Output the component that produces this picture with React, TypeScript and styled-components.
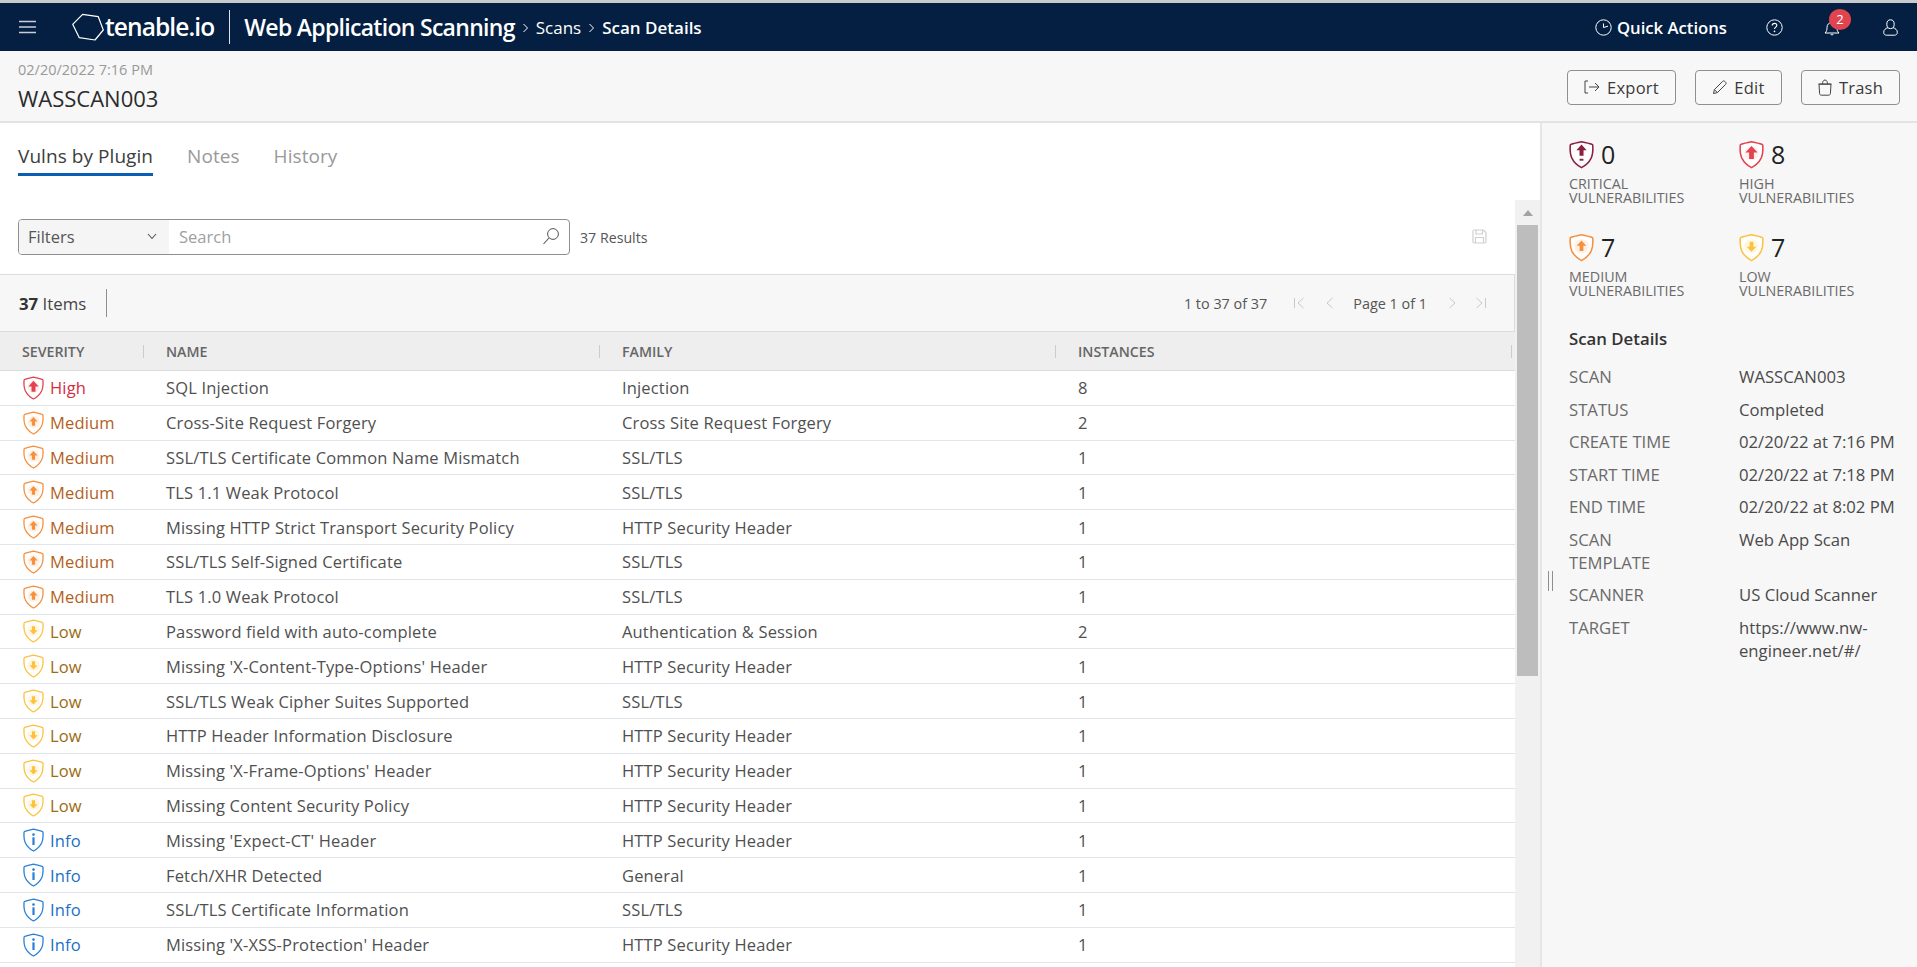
import React from 'react';
import styled, { createGlobalStyle } from 'styled-components';

const Global = createGlobalStyle`
  html, body { margin: 0; padding: 0; height: 100%; overflow: hidden; background: #fff; }
  body { font-family: "Open Sans", "Liberation Sans", sans-serif; color: #3a3a3a; }
  * { box-sizing: border-box; }
`;

const Page = styled.div`
  display: flex;
  flex-direction: column;
  height: 967px;
  overflow: hidden;
  border-top: 3px solid #c9cccf;
`;

const NavBar = styled.header`
  display: flex;
  align-items: center;
  height: 48px;
  flex: none;
  background: #041f42;
  color: #fff;
  padding-left: 18px;
  padding-right: 18px;
`;
const Burger = styled.svg`
  width: 19px;
  height: 14px;
  margin-right: 35px;
`;
const LogoMark = styled.svg`
  width: 32px;
  height: 30px;
  margin-right: 1px;
`;
const LogoText = styled.span`
  font-size: 24.5px;
  font-weight: 600;
  letter-spacing: -0.9px;
  line-height: 48px;
`;
const NavDivider = styled.div`
  width: 1px;
  height: 34px;
  background: #dfe3e8;
  margin: 0 14px 0 15px;
`;
const ProductName = styled.span`
  font-size: 23px;
  font-weight: 600;
  letter-spacing: -0.7px;
`;
const Crumb = styled.span<{ $current?: boolean }>`
  font-size: 17px;
  font-weight: ${p => (p.$current ? 600 : 400)};
  margin-left: 4px;
`;
const CrumbChevron = styled.svg`
  width: 7px;
  height: 10px;
  margin-left: 7px;
  margin-right: 3px;
  margin-top: 2px;
`;
const NavRight = styled.div`
  margin-left: auto;
  display: flex;
  align-items: center;
`;
const QuickActions = styled.span`
  display: flex;
  align-items: center;
  gap: 5px;
  font-size: 16.7px;
  font-weight: 600;
  margin-right: 39px;
`;
const NavIcon = styled.span<{ $gap: number }>`
  position: relative;
  display: flex;
  margin-right: ${p => p.$gap}px;
`;
const Badge = styled.span`
  position: absolute;
  left: 5px;
  top: -10px;
  width: 22px;
  height: 21px;
  border-radius: 50%;
  background: #e0454f;
  color: #fff;
  font-size: 13px;
  line-height: 21px;
  text-align: center;
`;

const SubHeader = styled.div`
  flex: none;
  height: 72px;
  display: flex;
  justify-content: space-between;
  background: #f7f7f7;
  border-bottom: 2px solid #e3e3e3;
  padding: 0 17px 0 18px;
`;
const TitleBlock = styled.div`
  display: flex;
  flex-direction: column;
  padding-top: 9px;
`;
const DateLine = styled.div`
  font-size: 14.5px;
  line-height: 19px;
  color: #999;
`;
const Title = styled.h1`
  margin: 4px 0 0;
  font-size: 22px;
  line-height: 30px;
  font-weight: 400;
  color: #2b2b2b;
`;
const Actions = styled.div`
  display: flex;
  gap: 19px;
  padding-top: 19px;
`;
const ActionButton = styled.button<{ $w: number }>`
  width: ${p => p.$w}px;
  height: 35px;
  display: flex;
  align-items: center;
  justify-content: center;
  gap: 7px;
  background: #f8f8f8;
  border: 1px solid #8f8f8f;
  border-radius: 4px;
  font-family: inherit;
  font-size: 16.5px;
  letter-spacing: 0.25px;
  color: #3a3a3a;
  padding: 0 0 1px;
`;

const Body = styled.div`
  flex: 1;
  display: flex;
  min-height: 0;
  position: relative;
`;
const Main = styled.main`
  width: 1540px;
  flex: none;
  display: flex;
  flex-direction: column;
  min-height: 0;
`;
const Tabs = styled.nav`
  flex: none;
  height: 77px;
  display: flex;
  gap: 34px;
  padding: 18px 18px 0;
`;
const Tab = styled.div<{ $active?: boolean }>`
  height: 35px;
  font-size: 19px;
  letter-spacing: 0.06px;
  line-height: 31px;
  color: ${p => (p.$active ? '#3d3d3d' : '#999')};
  border-bottom: ${p => (p.$active ? '3px solid #0a5fb4' : 'none')};
`;
const Content = styled.div`
  flex: 1;
  display: flex;
  min-height: 0;
`;
const TableColumn = styled.div`
  width: 1515px;
  flex: none;
  display: flex;
  flex-direction: column;
`;
const FilterRow = styled.div`
  flex: none;
  height: 74px;
  display: flex;
  align-items: flex-start;
  padding: 19px 28px 0 18px;
`;
const FilterBox = styled.div`
  width: 552px;
  height: 36px;
  display: flex;
  border: 1px solid #8f8f8f;
  border-radius: 4px;
  overflow: hidden;
`;
const FilterSelect = styled.div`
  width: 150px;
  display: flex;
  align-items: center;
  justify-content: space-between;
  padding: 0 12px 2px 9px;
  background: #f5f5f5;
  font-size: 16.5px;
  color: #555;
`;
const SearchField = styled.div`
  flex: 1;
  display: flex;
  align-items: center;
  justify-content: space-between;
  padding: 0 9px 2px 10px;
  font-size: 16.5px;
  color: #a0a0a0;
`;
const ResultCount = styled.span`
  margin-left: 10px;
  font-size: 14.2px;
  line-height: 37px;
  color: #555;
`;
const SaveIcon = styled.svg`
  margin-left: auto;
  margin-top: 10px;
  width: 15px;
  height: 15px;
`;
const Toolbar = styled.div`
  flex: none;
  height: 58px;
  display: flex;
  align-items: center;
  background: #f7f7f7;
  border-top: 1px solid #dcdcdc;
  border-bottom: 1px solid #dcdcdc;
  border-right: 1px solid #dcdcdc;
  padding-left: 19px;
`;
const ItemCount = styled.span`
  font-size: 16.8px;
  color: #444;
  padding-right: 20px;
  height: 28px;
  line-height: 29px;
  border-right: 1px solid #8f8f8f;
  b { font-weight: 700; color: #333; }
`;
const Pager = styled.div`
  margin-left: auto;
  display: flex;
  align-items: center;
  font-size: 14.4px;
  color: #555;
  padding-right: 27px;
`;
const PagerIcon = styled.svg<{ $before: number }>`
  width: 12px;
  height: 12px;
  margin-left: ${p => p.$before}px;
`;
const PagerLabel = styled.span<{ $before: number }>`
  margin-left: ${p => p.$before}px;
`;
const gridCols = '144px 456px 456px 1fr';
const HeaderRow = styled.div`
  flex: none;
  height: 39px;
  display: grid;
  grid-template-columns: ${gridCols};
  align-items: center;
  background: #eee;
  border-bottom: 1px solid #dcdcdc;
`;
const HeaderCell = styled.div`
  position: relative;
  padding-left: 22px;
  font-size: 14.2px;
  font-weight: 600;
  color: #666;
  &::after {
    content: '';
    position: absolute;
    right: 0;
    top: 3px;
    width: 1px;
    height: 13px;
    background: #ccc;
  }
  &:last-child::after { right: 3px; }
`;
const Row = styled.div`
  flex: none;
  height: 34.8px;
  display: grid;
  grid-template-columns: ${gridCols};
  align-items: center;
  border-bottom: 1px solid #e1e4ea;
  font-size: 16.5px;
  letter-spacing: 0.16px;
  color: #505050;
`;
const SeverityCell = styled.div<{ $c: string }>`
  display: flex;
  align-items: center;
  gap: 6px;
  padding-left: 23px;
  color: ${p => p.$c};
`;
const Cell = styled.div`
  padding-left: 22px;
`;
const Scrollbar = styled.div`
  flex: none;
  width: 25px;
  background: #f1f1f1;
  padding: 0 2px;
  display: flex;
  flex-direction: column;
  align-items: stretch;
`;
const ScrollArrow = styled.div`
  height: 25px;
  display: flex;
  align-items: center;
  justify-content: center;
  &::before {
    content: '';
    border-left: 5.5px solid transparent;
    border-right: 5.5px solid transparent;
    border-bottom: 6px solid #a3a3a3;
  }
`;
const ScrollThumb = styled.div`
  height: 451px;
  background: #bdbdbd;
`;
const Side = styled.aside`
  flex: 1;
  background: #f7f7f7;
  border-left: 2px solid #e6e6e6;
  padding: 16px 17px 0 27px;
`;
const Splitter = styled.div`
  position: absolute;
  left: 1548px;
  top: 448px;
  width: 5px;
  height: 20px;
  border-left: 1px solid #8f8f8f;
  border-right: 1px solid #8f8f8f;
`;
const StatGrid = styled.div`
  display: grid;
  grid-template-columns: 170px 1fr;
  row-gap: 27px;
`;
const Stat = styled.div``;
const StatTop = styled.div`
  display: flex;
  align-items: center;
  gap: 7px;
  height: 31px;
`;
const StatNumber = styled.span`
  font-size: 25px;
  line-height: 31px;
  color: #222;
`;
const StatLabel = styled.div`
  margin-top: 7px;
  font-size: 14.3px;
  line-height: 14px;
  color: #6a6a6a;
  text-transform: uppercase;
`;
const DetailsHeading = styled.h2`
  margin: 30px 0 15px;
  font-size: 16.8px;
  line-height: 22px;
  font-weight: 600;
  color: #333;
`;
const DetailRow = styled.div`
  display: grid;
  grid-template-columns: 170px 1fr;
  margin-bottom: 9.5px;
  font-size: 16.7px;
  line-height: 23px;
`;
const DetailKey = styled.div`
  color: #6a6a6a;
  padding-right: 50px;
`;
const DetailValue = styled.div`
  color: #4a4a4a;
  overflow-wrap: anywhere;
`;

type Sev = 'critical' | 'high' | 'medium' | 'low' | 'info';
const sevColor: Record<Sev, { icon: string; text: string; tint: string }> = {
  critical: { icon: '#8c1f3f', text: '#8c1f3f', tint: '#fff' },
  high: { icon: '#e2434f', text: '#d62b40', tint: '#feeeee' },
  medium: { icon: '#f5903f', text: '#b35f1c', tint: '#fef1e4' },
  low: { icon: '#fcc23f', text: '#9a6c12', tint: '#fff6e0' },
  info: { icon: '#2a80d8', text: '#1b6fc6', tint: '#fff' },
};
const sevLabel: Record<string, string> = { high: 'High', medium: 'Medium', low: 'Low', info: 'Info' };

const ARROW_UP = 'M10.5 4.8L15.6 10.4H12.5V15.8H8.5V10.4H5.4Z';
const ARROW_DOWN = 'M8.5 6.2H12.5V11.4H15.6L10.5 16.6L5.4 11.4H8.5Z';

const Shield = ({ sev, w = 21, h = 24 }: { sev: Sev; w?: number; h?: number }) => {
  const c = sevColor[sev];
  return (
    <svg width={w} height={h} viewBox="0 0 21 24" fill="none" style={{ flex: 'none' }}>
      <path
        d="M10.5 1.2C13.5 1.8 16.5 2.4 19.2 3.4C19.8 3.6 20 4 20 4.6C20.2 8.5 20 12 18.6 15C16.8 18.6 14 21.2 10.5 23C7 21.2 4.2 18.6 2.4 15C1 12 .8 8.5 1 4.6C1 4 1.2 3.6 1.8 3.4C4.5 2.4 7.5 1.8 10.5 1.2Z"
        stroke={c.icon}
        strokeWidth="1.3"
        fill="#fff"
      />
      {sev !== 'info' && <circle cx="10.5" cy="11" r="6" fill={c.tint} />}
      {sev === 'high' && <path d={ARROW_UP} fill={c.icon} />}
      {sev === 'medium' && <path d={ARROW_UP} fill={c.icon} transform="translate(2.1 2.2) scale(.8)" />}
      {sev === 'critical' && (
        <>
          <path d={ARROW_UP} fill={c.icon} transform="translate(1.6 -.4) scale(.85)" />
          <rect x="8.9" y="15.6" width="3.2" height="1.6" fill={c.icon} />
        </>
      )}
      {sev === 'low' && <path d={ARROW_DOWN} fill={c.icon} transform="translate(2.1 2.2) scale(.8)" />}
      {sev === 'info' && (
        <>
          <circle cx="10.5" cy="6.6" r="1.3" fill={c.icon} />
          <rect x="9.4" y="9.3" width="2.2" height="7.7" fill={c.icon} />
        </>
      )}
    </svg>
  );
};

const rows: [Sev, string, string, number][] = [
  ['high', 'SQL Injection', 'Injection', 8],
  ['medium', 'Cross-Site Request Forgery', 'Cross Site Request Forgery', 2],
  ['medium', 'SSL/TLS Certificate Common Name Mismatch', 'SSL/TLS', 1],
  ['medium', 'TLS 1.1 Weak Protocol', 'SSL/TLS', 1],
  ['medium', 'Missing HTTP Strict Transport Security Policy', 'HTTP Security Header', 1],
  ['medium', 'SSL/TLS Self-Signed Certificate', 'SSL/TLS', 1],
  ['medium', 'TLS 1.0 Weak Protocol', 'SSL/TLS', 1],
  ['low', 'Password field with auto-complete', 'Authentication & Session', 2],
  ['low', "Missing 'X-Content-Type-Options' Header", 'HTTP Security Header', 1],
  ['low', 'SSL/TLS Weak Cipher Suites Supported', 'SSL/TLS', 1],
  ['low', 'HTTP Header Information Disclosure', 'HTTP Security Header', 1],
  ['low', "Missing 'X-Frame-Options' Header", 'HTTP Security Header', 1],
  ['low', 'Missing Content Security Policy', 'HTTP Security Header', 1],
  ['info', "Missing 'Expect-CT' Header", 'HTTP Security Header', 1],
  ['info', 'Fetch/XHR Detected', 'General', 1],
  ['info', 'SSL/TLS Certificate Information', 'SSL/TLS', 1],
  ['info', "Missing 'X-XSS-Protection' Header", 'HTTP Security Header', 1],
];

const stats: [Sev, number, string][] = [
  ['critical', 0, 'Critical'],
  ['high', 8, 'High'],
  ['medium', 7, 'Medium'],
  ['low', 7, 'Low'],
];

const details: [string, string][] = [
  ['SCAN', 'WASSCAN003'],
  ['STATUS', 'Completed'],
  ['CREATE TIME', '02/20/22 at 7:16 PM'],
  ['START TIME', '02/20/22 at 7:18 PM'],
  ['END TIME', '02/20/22 at 8:02 PM'],
  ['SCAN TEMPLATE', 'Web App Scan'],
  ['SCANNER', 'US Cloud Scanner'],
  ['TARGET', 'https://www.nw-engineer.net/#/'],
];

const Chevron = () => (
  <CrumbChevron viewBox="0 0 7 10" fill="none">
    <path d="M1.5 1L5.5 5L1.5 9" stroke="#fff" strokeWidth="1" />
  </CrumbChevron>
);

const PAGER_STROKE = '#c9c9c9';

export default function App() {
  return (
    <Page>
      <Global />
      <NavBar>
        <Burger viewBox="0 0 19 14" fill="none">
          <path d="M1 1.5H18M1 7H18M1 12.5H18" stroke="#c9ced6" strokeWidth="1.6" />
        </Burger>
        <LogoMark viewBox="0 0 32 30" fill="none">
          <path d="M10.6 2.3L26.3 4.7L31.3 18L23 28L7.3 25.7L.7 12.3Z" stroke="#fff" strokeWidth="1.2" strokeLinejoin="round" />
        </LogoMark>
        <LogoText>tenable.io</LogoText>
        <NavDivider />
        <ProductName>Web Application Scanning</ProductName>
        <Chevron />
        <Crumb>Scans</Crumb>
        <Chevron />
        <Crumb $current>Scan Details</Crumb>
        <NavRight>
          <QuickActions>
            <svg width="17" height="17" viewBox="0 0 17 17" fill="none">
              <circle cx="8.5" cy="8.5" r="7.7" stroke="#fff" strokeWidth="1" />
              <path d="M8.5 4.5V8.5L13 7.2" stroke="#fff" strokeWidth="1" />
            </svg>
            Quick Actions
          </QuickActions>
          <NavIcon $gap={41}>
            <svg width="17" height="17" viewBox="0 0 17 17" fill="none">
              <circle cx="8.5" cy="8.5" r="7.7" stroke="#fff" strokeWidth="1" />
              <path d="M6.2 6.6C6.2 5.2 7.2 4.4 8.5 4.4C9.8 4.4 10.8 5.2 10.8 6.4C10.8 8 8.5 8.2 8.5 10" stroke="#fff" strokeWidth="1.1" />
              <circle cx="8.5" cy="12.4" r=".8" fill="#fff" />
            </svg>
          </NavIcon>
          <NavIcon $gap={43}>
            <svg width="16" height="17" viewBox="0 0 16 17" fill="none">
              <path d="M1 14C2.6 12.6 3 11 3 8.5C3 5.5 5 3.4 8 3.4C11 3.4 13 5.5 13 8.5C13 11 13.4 12.6 15 14Z" stroke="#fff" strokeWidth="1" strokeLinejoin="round" />
              <path d="M6.6 15C7 16.2 9 16.2 9.4 15" stroke="#fff" strokeWidth="1" />
            </svg>
            <Badge>2</Badge>
          </NavIcon>
          <NavIcon $gap={1}>
            <svg width="15" height="17" viewBox="0 0 15 17" fill="none">
              <ellipse cx="7.5" cy="5.2" rx="3.7" ry="4.4" stroke="#fff" strokeWidth="1" />
              <path d="M5 8.6C2.5 9.4.7 11 .7 13.2C.7 15.3 2 16.2 3.5 16.2H11.5C13 16.2 14.3 15.3 14.3 13.2C14.3 11 12.5 9.4 10 8.6" stroke="#fff" strokeWidth="1" />
            </svg>
          </NavIcon>
        </NavRight>
      </NavBar>

      <SubHeader>
        <TitleBlock>
          <DateLine>02/20/2022 7:16 PM</DateLine>
          <Title>WASSCAN003</Title>
        </TitleBlock>
        <Actions>
          <ActionButton $w={109}>
            <svg width="16" height="14" viewBox="0 0 16 14" fill="none">
              <path d="M4 1H1V13H4" stroke="#444" strokeWidth="1" />
              <path d="M5 7H15M11 3L15 7L11 11" stroke="#444" strokeWidth="1" />
            </svg>
            Export
          </ActionButton>
          <ActionButton $w={87}>
            <svg width="15" height="15" viewBox="0 0 15 15" fill="none">
              <path d="M1.5 13.5L2.4 9.6L10.6 1.4C11.2.8 12.2.8 12.8 1.4L13.6 2.2C14.2 2.8 14.2 3.8 13.6 4.4L5.4 12.6Z" stroke="#444" strokeWidth="1" />
              <path d="M2.4 9.6L5.4 12.6" stroke="#444" strokeWidth="1" />
            </svg>
            Edit
          </ActionButton>
          <ActionButton $w={99}>
            <svg width="14" height="17" viewBox="0 0 14 17" fill="none">
              <path d="M1 5.2H13L12.4 14.6C12.3 15.6 11.6 16.2 10.6 16.2H3.4C2.4 16.2 1.7 15.6 1.6 14.6Z" stroke="#444" strokeWidth="1" />
              <path d="M.5 5H13.5M4.5 5C4.5 2.5 5.5 1 7 1C8.5 1 9.5 2.5 9.5 5" stroke="#444" strokeWidth="1" />
            </svg>
            Trash
          </ActionButton>
        </Actions>
      </SubHeader>

      <Body>
        <Main>
          <Tabs>
            <Tab $active>Vulns by Plugin</Tab>
            <Tab>Notes</Tab>
            <Tab>History</Tab>
          </Tabs>
          <Content>
            <TableColumn>
              <FilterRow>
                <FilterBox>
                  <FilterSelect>
                    Filters
                    <svg width="10" height="7" viewBox="0 0 10 7" fill="none">
                      <path d="M1 1L5 5.5L9 1" stroke="#555" strokeWidth="1.1" />
                    </svg>
                  </FilterSelect>
                  <SearchField>
                    Search
                    <svg width="18" height="18" viewBox="0 0 18 18" fill="none">
                      <circle cx="11" cy="7" r="5.4" stroke="#555" strokeWidth="1" />
                      <path d="M7 11L1.5 17" stroke="#555" strokeWidth="1.1" />
                    </svg>
                  </SearchField>
                </FilterBox>
                <ResultCount>37 Results</ResultCount>
                <SaveIcon viewBox="0 0 15 15" fill="none">
                  <path d="M1 2.2C1 1.5 1.5 1 2.2 1H11.5L14 3.5V12.8C14 13.5 13.5 14 12.8 14H2.2C1.5 14 1 13.5 1 12.8Z" stroke="#d0d0d0" strokeWidth="1.2" />
                  <path d="M4 1V5H10.5V1M3.5 14V8.5H11.5V14" stroke="#d0d0d0" strokeWidth="1.2" />
                </SaveIcon>
              </FilterRow>
              <Toolbar>
                <ItemCount><b>37</b> Items</ItemCount>
                <Pager>
                  1 to 37 of 37
                  <PagerIcon $before={26} viewBox="0 0 12 12" fill="none">
                    <path d="M1.5 1V11M10.5 1L5 6L10.5 11" stroke={PAGER_STROKE} strokeWidth="1" />
                  </PagerIcon>
                  <PagerIcon $before={18.5} viewBox="0 0 12 12" fill="none">
                    <path d="M8.5 1L3 6L8.5 11" stroke={PAGER_STROKE} strokeWidth="1" />
                  </PagerIcon>
                  <PagerLabel $before={17.5}>Page 1 of 1</PagerLabel>
                  <PagerIcon $before={19} viewBox="0 0 12 12" fill="none">
                    <path d="M3.5 1L9 6L3.5 11" stroke={PAGER_STROKE} strokeWidth="1" />
                  </PagerIcon>
                  <PagerIcon $before={17} viewBox="0 0 12 12" fill="none">
                    <path d="M1.5 1L7 6L1.5 11M10.5 1V11" stroke={PAGER_STROKE} strokeWidth="1" />
                  </PagerIcon>
                </Pager>
              </Toolbar>
              <HeaderRow>
                <HeaderCell>SEVERITY</HeaderCell>
                <HeaderCell>NAME</HeaderCell>
                <HeaderCell>FAMILY</HeaderCell>
                <HeaderCell>INSTANCES</HeaderCell>
              </HeaderRow>
              {rows.map(([sev, name, family, count], i) => (
                <Row key={i}>
                  <SeverityCell $c={sevColor[sev].text}>
                    <Shield sev={sev} />
                    {sevLabel[sev]}
                  </SeverityCell>
                  <Cell>{name}</Cell>
                  <Cell>{family}</Cell>
                  <Cell>{count}</Cell>
                </Row>
              ))}
            </TableColumn>
            <Scrollbar>
              <ScrollArrow />
              <ScrollThumb />
            </Scrollbar>
          </Content>
        </Main>
        <Side>
          <StatGrid>
            {stats.map(([sev, n, label]) => (
              <Stat key={label}>
                <StatTop>
                  <Shield sev={sev} w={25} h={29} />
                  <StatNumber>{n}</StatNumber>
                </StatTop>
                <StatLabel>{label}<br />Vulnerabilities</StatLabel>
              </Stat>
            ))}
          </StatGrid>
          <DetailsHeading>Scan Details</DetailsHeading>
          {details.map(([k, v]) => (
            <DetailRow key={k}>
              <DetailKey>{k}</DetailKey>
              <DetailValue>{v}</DetailValue>
            </DetailRow>
          ))}
        </Side>
        <Splitter />
      </Body>
    </Page>
  );
}
